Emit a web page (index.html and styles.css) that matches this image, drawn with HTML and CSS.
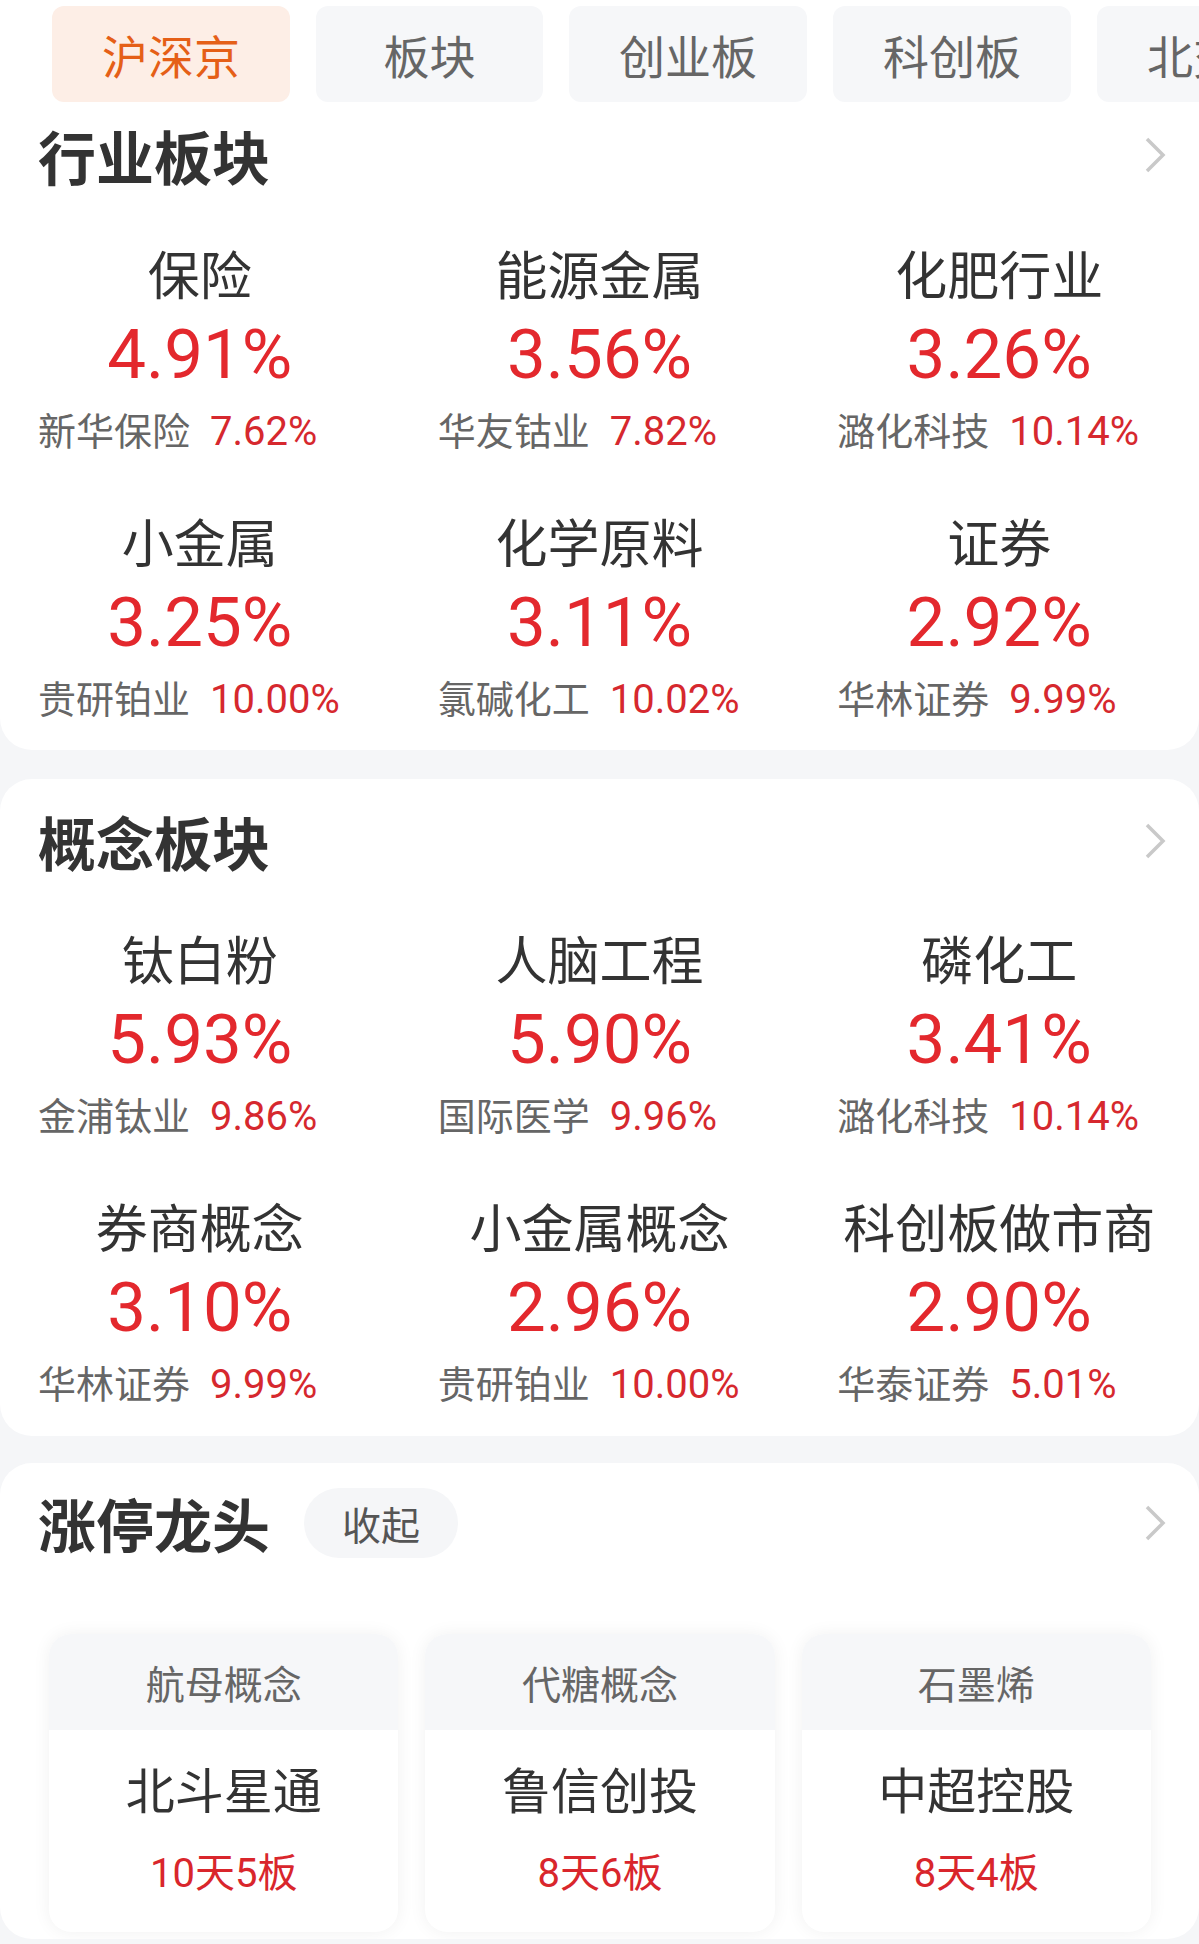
FILE: index.html
```html
<!DOCTYPE html>
<html lang="zh-CN">
<head>
    <meta charset="UTF-8">
    <meta name="viewport" content="width=device-width, initial-scale=1.0">
    <title>板块行情</title>
    <link rel="stylesheet" href="styles.css">
</head>
<body>
    <section class="card card-top">
        <div class="tabs">
            <div class="tab active">沪深京</div>
            <div class="tab">板块</div>
            <div class="tab">创业板</div>
            <div class="tab">科创板</div>
            <div class="tab">北交所</div>
        </div>
        <div class="card-head">
            <h2>行业板块</h2>
            <svg class="chevron" viewBox="0 0 24 40"><path d="M4 4 L20 20 L4 36"/></svg>
        </div>
        <div class="grid">
            <div class="item">
                <div class="name">保险</div>
                <div class="pct">4.91%</div>
                <div class="sub"><span>新华保险</span><em>7.62%</em></div>
            </div>
            <div class="item">
                <div class="name">能源金属</div>
                <div class="pct">3.56%</div>
                <div class="sub"><span>华友钴业</span><em>7.82%</em></div>
            </div>
            <div class="item">
                <div class="name">化肥行业</div>
                <div class="pct">3.26%</div>
                <div class="sub"><span>潞化科技</span><em>10.14%</em></div>
            </div>
            <div class="item">
                <div class="name">小金属</div>
                <div class="pct">3.25%</div>
                <div class="sub"><span>贵研铂业</span><em>10.00%</em></div>
            </div>
            <div class="item">
                <div class="name">化学原料</div>
                <div class="pct">3.11%</div>
                <div class="sub"><span>氯碱化工</span><em>10.02%</em></div>
            </div>
            <div class="item">
                <div class="name">证券</div>
                <div class="pct">2.92%</div>
                <div class="sub"><span>华林证券</span><em>9.99%</em></div>
            </div>
        </div>
    </section>

    <section class="card">
        <div class="card-head">
            <h2>概念板块</h2>
            <svg class="chevron" viewBox="0 0 24 40"><path d="M4 4 L20 20 L4 36"/></svg>
        </div>
        <div class="grid">
            <div class="item">
                <div class="name">钛白粉</div>
                <div class="pct">5.93%</div>
                <div class="sub"><span>金浦钛业</span><em>9.86%</em></div>
            </div>
            <div class="item">
                <div class="name">人脑工程</div>
                <div class="pct">5.90%</div>
                <div class="sub"><span>国际医学</span><em>9.96%</em></div>
            </div>
            <div class="item">
                <div class="name">磷化工</div>
                <div class="pct">3.41%</div>
                <div class="sub"><span>潞化科技</span><em>10.14%</em></div>
            </div>
            <div class="item">
                <div class="name">券商概念</div>
                <div class="pct">3.10%</div>
                <div class="sub"><span>华林证券</span><em>9.99%</em></div>
            </div>
            <div class="item">
                <div class="name">小金属概念</div>
                <div class="pct">2.96%</div>
                <div class="sub"><span>贵研铂业</span><em>10.00%</em></div>
            </div>
            <div class="item">
                <div class="name">科创板做市商</div>
                <div class="pct">2.90%</div>
                <div class="sub"><span>华泰证券</span><em>5.01%</em></div>
            </div>
        </div>
    </section>

    <section class="card card-last">
        <div class="card-head">
            <h2>涨停龙头</h2>
            <div class="pill">收起</div>
            <svg class="chevron" viewBox="0 0 24 40"><path d="M4 4 L20 20 L4 36"/></svg>
        </div>
        <div class="leaders">
            <div class="leader">
                <div class="leader-head">航母概念</div>
                <div class="leader-body">
                    <div class="leader-name">北斗星通</div>
                    <div class="leader-days">10天5板</div>
                </div>
            </div>
            <div class="leader">
                <div class="leader-head">代糖概念</div>
                <div class="leader-body">
                    <div class="leader-name">鲁信创投</div>
                    <div class="leader-days">8天6板</div>
                </div>
            </div>
            <div class="leader">
                <div class="leader-head">石墨烯</div>
                <div class="leader-body">
                    <div class="leader-name">中超控股</div>
                    <div class="leader-days">8天4板</div>
                </div>
            </div>
        </div>
    </section>
</body>
</html>
```

FILE: styles.css
```css
body {
    margin: 0;
    padding: 0;
    background-color: #f5f6f8;
    font-family: "Noto Sans CJK SC", sans-serif;
    color: #333;
    overflow: hidden;
}

.card {
    background-color: #fff;
    border-radius: 32px;
    margin-top: 29px;
    padding: 27px 0 29px;
}

.card-top {
    margin-top: 0;
    padding-top: 6px;
    padding-bottom: 28px;
    border-radius: 0 0 32px 32px;
}

.card-last {
    margin-top: 27px;
    padding-top: 25px;
    padding-bottom: 7px;
}

.tabs {
    display: flex;
    gap: 26px;
    padding-left: 52px;
    overflow: hidden;
    white-space: nowrap;
}

.tab {
    flex: none;
    box-sizing: border-box;
    min-width: 227px;
    height: 96px;
    padding: 0 50px;
    line-height: 96px;
    text-align: center;
    font-size: 46px;
    color: #666;
    background-color: #f6f7f9;
    border-radius: 12px;
}

.tab.active {
    color: #e55f17;
    background-color: #fdeee6;
}

.card-head {
    display: flex;
    align-items: center;
    height: 70px;
    padding: 0 32px 0 38px;
}

.card-top .card-head {
    margin-top: 18px;
}

.card-top .grid {
    margin-top: 53px;
}

.card-head h2 {
    margin: 0;
    font-size: 58px;
    font-weight: bold;
    line-height: 70px;
    color: #333;
}

.chevron {
    width: 24px;
    height: 40px;
    margin-left: auto;
    fill: none;
    stroke: #c9c9c9;
    stroke-width: 3.5;
}

.pill {
    margin-left: 34px;
    height: 70px;
    padding: 0 38px;
    line-height: 70px;
    font-size: 39px;
    color: #555;
    background-color: #f5f6f8;
    border-radius: 35px;
}

.grid {
    display: grid;
    grid-template-columns: repeat(3, 1fr);
    row-gap: 57px;
    margin-top: 52px;
}

.item {
    text-align: center;
}

.name {
    font-size: 52px;
    line-height: 60px;
    color: #333;
    white-space: nowrap;
}

.pct {
    margin-top: 12px;
    font-family: Roboto, "Noto Sans CJK SC", sans-serif;
    font-size: 69px;
    line-height: 80px;
    height: 80px;
    color: #e3282d;
}

.sub {
    display: flex;
    align-items: baseline;
    height: 50px;
    margin-top: 9px;
    padding-left: 38px;
    white-space: nowrap;
    font-size: 38px;
    line-height: 50px;
    color: #666;
}

.sub em {
    font-style: normal;
    font-family: Roboto, "Noto Sans CJK SC", sans-serif;
    font-size: 40px;
    margin-left: 20px;
    color: #d6282e;
}

.leaders {
    display: grid;
    grid-template-columns: repeat(3, 1fr);
    gap: 27px;
    margin-top: 76px;
    padding: 0 48px 0 49px;
}

.leader {
    border-radius: 22px;
    background-color: #fff;
    overflow: hidden;
    box-shadow: 0 0 18px rgba(0, 0, 0, 0.06);
}

.leader-head {
    height: 96px;
    line-height: 96px;
    text-align: center;
    font-size: 39px;
    color: #666;
    background-color: #f6f7f9;
}

.leader-body {
    padding: 28px 0 33px;
    text-align: center;
}

.leader-name {
    font-size: 49px;
    line-height: 60px;
    height: 60px;
    color: #333;
}

.leader-days {
    margin-top: 31px;
    font-family: Roboto, "Noto Sans CJK SC", sans-serif;
    font-size: 40px;
    line-height: 50px;
    height: 50px;
    color: #d9262c;
}
```
